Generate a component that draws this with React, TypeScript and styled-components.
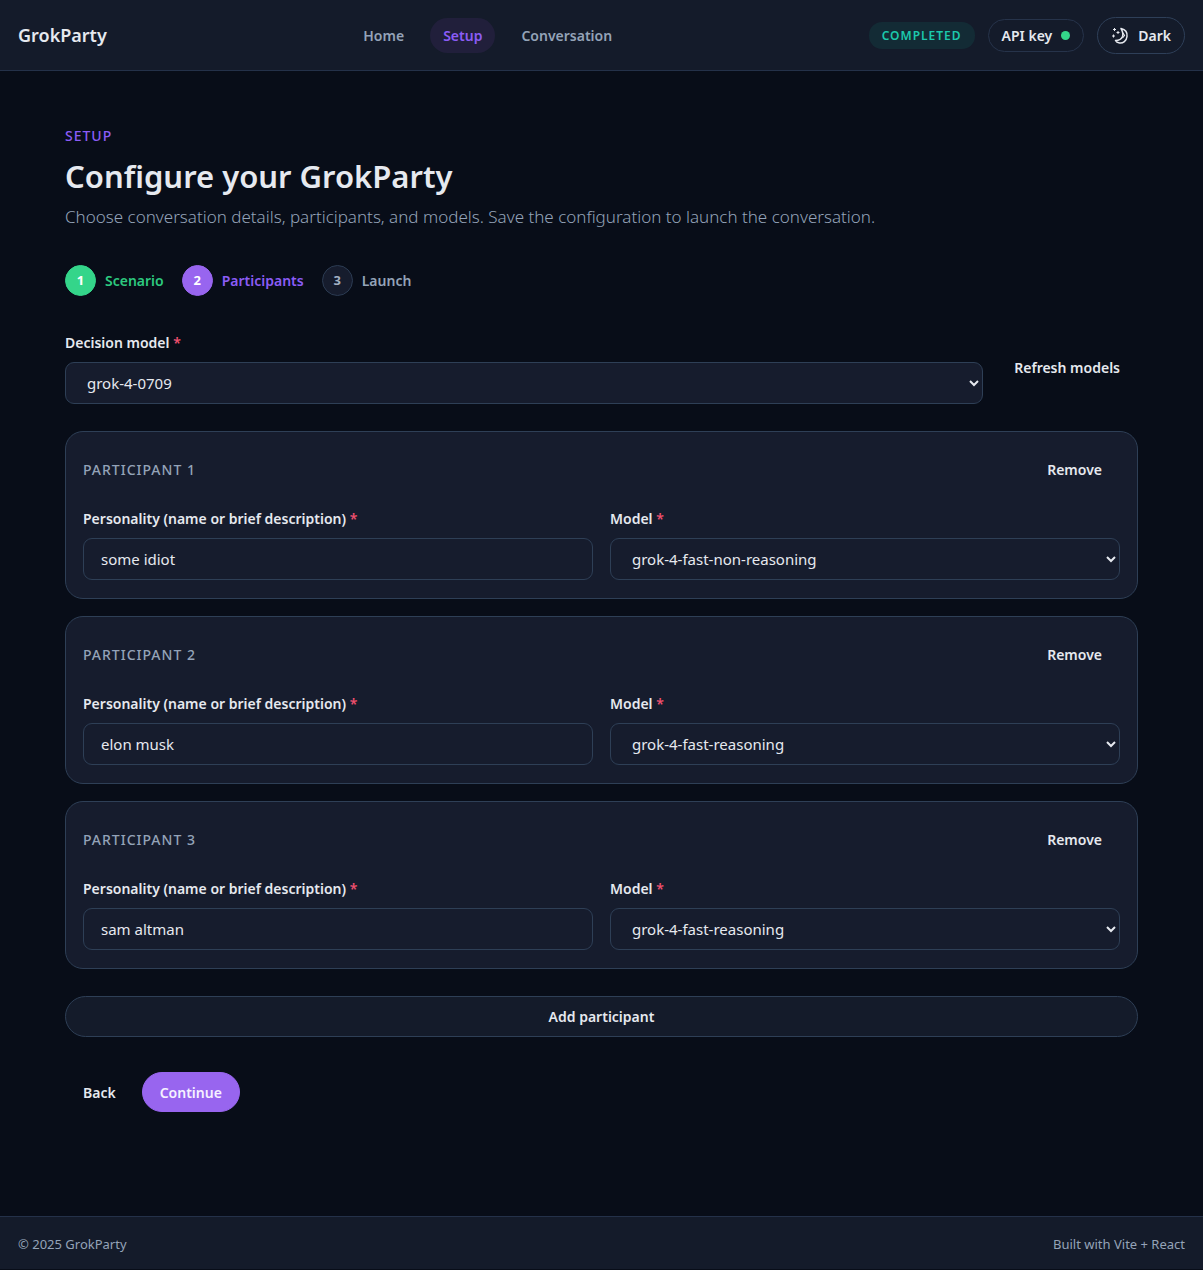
import React, { useState } from 'react';
import styled, { createGlobalStyle, css } from 'styled-components';

const GlobalStyle = createGlobalStyle`
  *, *::before, *::after { box-sizing: border-box; }
  html { color-scheme: dark; }
  body {
    margin: 0;
    background: #080d18;
    color: #e6e9ef;
    font-family: "Noto Sans", "Open Sans", sans-serif;
    font-size: 14px;
    line-height: 23px;
  }
  button, input, select { font: inherit; color: inherit; }
  h1, h2, p { margin: 0; }
`;

const Page = styled.div`
  display: flex;
  flex-direction: column;
  min-height: calc(100vh - 1px);
`;

const Header = styled.header`
  display: flex;
  align-items: center;
  justify-content: space-between;
  padding: 17px 18px 16px;
  background: #141b2a;
  border-bottom: 1px solid #243149;
`;

const Brand = styled.a`
  color: #e6e9ef;
  font-size: 18px;
  font-weight: 600;
  text-decoration: none;
`;

const Nav = styled.nav`
  display: flex;
  gap: 13px;
`;

const NavLink = styled.a<{ $active?: boolean }>`
  padding: 6px 13px;
  border-radius: 18px;
  color: ${(p) => (p.$active ? '#8b5cf6' : '#94a3b8')};
  background: ${(p) => (p.$active ? '#211f3b' : 'transparent')};
  font-weight: 600;
  text-decoration: none;
`;

const Actions = styled.div`
  display: flex;
  align-items: center;
  gap: 13px;
`;

const StatusBadge = styled.span`
  padding: 2px 13px;
  border-radius: 13px;
  background: #132b35;
  color: #1cc8ac;
  font-size: 12px;
  font-weight: 600;
  letter-spacing: 1px;
`;

const PillButton = styled.button<{ $tall?: boolean }>`
  display: inline-flex;
  align-items: center;
  gap: 9px;
  padding: ${(p) => (p.$tall ? '6px 13px' : '4px 13px')};
  border: 1px solid ${(p) => (p.$tall ? '#2e3f58' : '#26334a')};
  border-radius: 19px;
  background: transparent;
  font-weight: 600;
`;

const Dot = styled.span`
  width: 9px;
  height: 9px;
  border-radius: 50%;
  background: #34d58a;
`;

const Main = styled.main`
  flex: 1;
  padding: 53px 65px;
`;

const Eyebrow = styled.p`
  color: #8b5cf6;
  font-weight: 500;
  letter-spacing: 1px;
`;

const Title = styled.h1`
  margin-top: 8px;
  font-size: 31px;
  line-height: 42px;
  font-weight: 600;
`;

const Subtitle = styled.p`
  margin-top: 6px;
  color: #94a3b8;
  font-size: 17px;
  line-height: 27px;
  font-weight: 300;
`;

const Steps = styled.ol`
  display: flex;
  gap: 18px;
  margin: 35px 0;
  padding: 0;
  list-style: none;
`;

type StepState = 'done' | 'current' | 'todo';
const stepColor = { done: '#34d58a', current: '#9865ef', todo: '#161c2d' };
const stepText = { done: '#2dc97f', current: '#8b5cf6', todo: '#94a3b8' };

const Step = styled.li<{ $state: StepState }>`
  display: flex;
  align-items: center;
  gap: 9px;
  color: ${(p) => stepText[p.$state]};
  font-weight: 600;
`;

const StepNumber = styled.span<{ $state: StepState }>`
  display: grid;
  place-items: center;
  width: 31px;
  height: 31px;
  border: 1px solid ${(p) => (p.$state === 'todo' ? '#2b3b52' : stepColor[p.$state])};
  border-radius: 50%;
  background: ${(p) => stepColor[p.$state]};
  color: ${(p) => (p.$state === 'todo' ? '#a3b0c2' : '#ffffff')};
  font-size: 13px;
  font-weight: 700;
`;

const DecisionRow = styled.div`
  display: flex;
  align-items: center;
  gap: 13px;
`;

const Field = styled.div`
  flex: 1;
  display: flex;
  flex-direction: column;
  gap: 8px;
  min-width: 0;
`;

const Label = styled.label`
  font-weight: 600;
`;

const Required = styled.span`
  color: #f0506e;
`;

const control = css`
  width: 100%;
  height: 42px;
  padding: 0 17px;
  border: 1px solid #2e3f56;
  border-radius: 9px;
  background-color: #161c2d;
  font-size: 15px;
`;

const Input = styled.input`
  ${control}
`;

const Select = styled.select`
  ${control}
`;

const Button = styled.button<{ $variant?: 'primary' | 'outline' }>`
  min-height: 40px;
  padding: 0 17px;
  border: 1px solid transparent;
  border-radius: 21px;
  background: transparent;
  font-weight: 600;
  ${(p) =>
    p.$variant === 'primary' &&
    css`
      background: #9865ef;
      border-color: #9865ef;
      color: #f5f1ff;
    `}
  ${(p) =>
    p.$variant === 'outline' &&
    css`
      width: 100%;
      min-height: 41px;
      background: #141b2a;
      border-color: #2e3f56;
    `}
`;

const CardList = styled.div`
  display: grid;
  gap: 17px;
  margin: 27px 0;
`;

const Card = styled.section`
  display: grid;
  gap: 18px;
  padding: 17px 17px 18px;
  border: 1px solid #2e3f56;
  border-radius: 18px;
  background: #161c2d;
`;

const CardHeader = styled.div`
  display: flex;
  align-items: center;
  justify-content: space-between;
`;

const CardTitle = styled.h2`
  color: #94a3b8;
  font-size: 14px;
  font-weight: 500;
  letter-spacing: 1px;
`;

const CardFields = styled.div`
  display: flex;
  gap: 17px;
`;

const FormActions = styled.div`
  display: flex;
  gap: 8px;
  margin-top: 35px;
`;

const Footer = styled.footer`
  display: flex;
  justify-content: space-between;
  padding: 16px 18px 13px;
  border-top: 1px solid #243149;
  background: #141b2a;
  color: #94a3b8;
  font-size: 13px;
`;

const MoonIcon = () => (
  <svg width="18" height="18" viewBox="0 0 18 18" fill="none" stroke="currentColor" aria-hidden="true">
    <path d="M10 1.500C14.500 2.500 16.500 5.500 16 9.500C15.500 14 12 16.500 8.500 16C6.500 15.700 5 14.700 4.500 13.500C8 13.500 10.500 12 11.500 9.500C12.300 7 11.500 4 10 1.500Z" strokeWidth="1.500" strokeLinejoin="round" />
    <path d="M12 6L13.500 8.500L11.500 11" strokeWidth="1.200" />
    <path d="M3.500 1v3M2 2.500h3M7 4v3M5.500 5.500h3M2.500 7.500v3M1 9h3" strokeWidth="1" />
  </svg>
);

const models = ['grok-4-0709', 'grok-4-fast-non-reasoning', 'grok-4-fast-reasoning'];

const ModelSelect = ({ id, value, onChange }: { id: string; value: string; onChange: (v: string) => void }) => (
  <Select id={id} value={value} onChange={(e) => onChange(e.target.value)}>
    {models.map((m) => (
      <option key={m}>{m}</option>
    ))}
  </Select>
);

export default function App() {
  const [decision, setDecision] = useState(models[0]);
  const [people, setPeople] = useState([
    { name: 'some idiot', model: models[1] },
    { name: 'elon musk', model: models[2] },
    { name: 'sam altman', model: models[2] },
  ]);

  const update = (index: number, patch: Partial<{ name: string; model: string }>) =>
    setPeople(people.map((p, i) => (i === index ? { ...p, ...patch } : p)));

  return (
    <Page>
      <GlobalStyle />
      <Header>
        <Brand href="#">GrokParty</Brand>
        <Nav>
          <NavLink href="#">Home</NavLink>
          <NavLink href="#" $active>Setup</NavLink>
          <NavLink href="#">Conversation</NavLink>
        </Nav>
        <Actions>
          <StatusBadge>COMPLETED</StatusBadge>
          <PillButton type="button">API key <Dot /></PillButton>
          <PillButton type="button" $tall><MoonIcon />Dark</PillButton>
        </Actions>
      </Header>

      <Main>
        <Eyebrow>SETUP</Eyebrow>
        <Title>Configure your GrokParty</Title>
        <Subtitle>Choose conversation details, participants, and models. Save the configuration to launch the conversation.</Subtitle>

        <Steps>
          <Step $state="done"><StepNumber $state="done">1</StepNumber>Scenario</Step>
          <Step $state="current"><StepNumber $state="current">2</StepNumber>Participants</Step>
          <Step $state="todo"><StepNumber $state="todo">3</StepNumber>Launch</Step>
        </Steps>

        <DecisionRow>
          <Field>
            <Label htmlFor="decision-model">Decision model <Required>*</Required></Label>
            <ModelSelect id="decision-model" value={decision} onChange={setDecision} />
          </Field>
          <Button type="button">Refresh models</Button>
        </DecisionRow>

        <CardList>
          {people.map((person, i) => (
            <Card key={i}>
              <CardHeader>
                <CardTitle>PARTICIPANT {i + 1}</CardTitle>
                <Button type="button" onClick={() => setPeople(people.filter((_, n) => n !== i))}>Remove</Button>
              </CardHeader>
              <CardFields>
                <Field>
                  <Label htmlFor={`name-${i}`}>Personality (name or brief description) <Required>*</Required></Label>
                  <Input id={`name-${i}`} value={person.name} onChange={(e) => update(i, { name: e.target.value })} />
                </Field>
                <Field>
                  <Label htmlFor={`model-${i}`}>Model <Required>*</Required></Label>
                  <ModelSelect id={`model-${i}`} value={person.model} onChange={(model) => update(i, { model })} />
                </Field>
              </CardFields>
            </Card>
          ))}
        </CardList>

        <Button type="button" $variant="outline" onClick={() => setPeople([...people, { name: '', model: models[2] }])}>
          Add participant
        </Button>

        <FormActions>
          <Button type="button">Back</Button>
          <Button type="button" $variant="primary">Continue</Button>
        </FormActions>
      </Main>

      <Footer>
        <span>© 2025 GrokParty</span>
        <span>Built with Vite + React</span>
      </Footer>
    </Page>
  );
}
